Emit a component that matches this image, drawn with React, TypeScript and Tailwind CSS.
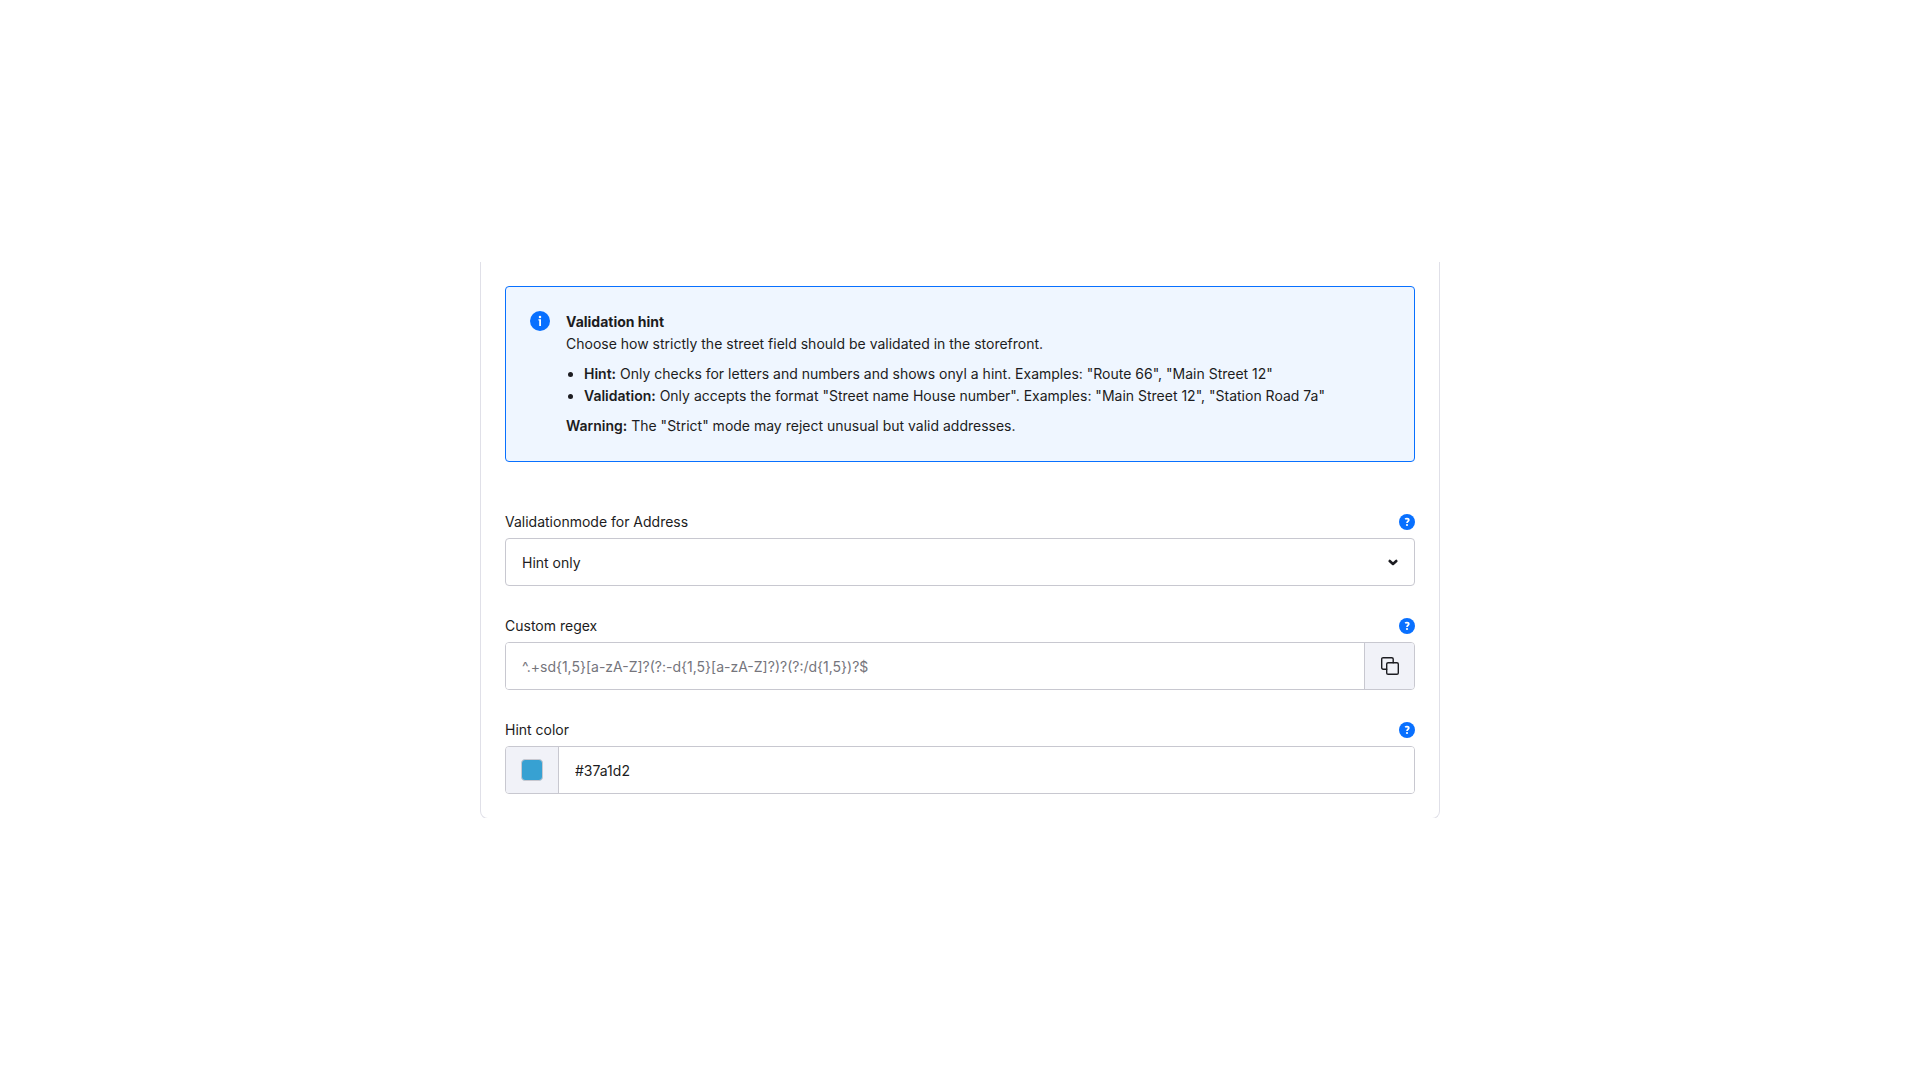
import { useState } from 'react';
import type { ReactNode } from 'react';

function InfoIcon() {
  return (
    <svg className="size-5 shrink-0" viewBox="0 0 20 20" aria-hidden="true">
      <circle cx="10" cy="10" r="10" fill="#0870ff" />
      <circle cx="10" cy="6" r="1.25" fill="#fff" />
      <path d="M8.4 8.2H11V15H9.2V9.5H8.4Z" fill="#fff" />
    </svg>
  );
}

function HelpButton({ topic }: { topic: string }) {
  return (
    <button type="button" aria-label={`Help: ${topic}`} className="size-4 shrink-0">
      <svg className="size-4" viewBox="0 0 16 16" aria-hidden="true">
        <circle cx="8" cy="8" r="8" fill="#0870ff" />
        <path
          d="M6.1 5.2C6.6 4.8 7.2 4.6 8 4.6C9.1 4.6 9.8 5.1 9.8 6C9.8 7.3 8 7.3 8 9"
          fill="none"
          stroke="#fff"
          strokeWidth="1.7"
        />
        <circle cx="8" cy="11" r="1.1" fill="#fff" />
      </svg>
    </button>
  );
}

function Field({ id, label, children }: { id: string; label: string; children: ReactNode }) {
  return (
    <div className="flex flex-col gap-2">
      <div className="flex items-center justify-between">
        <label htmlFor={id} className="leading-4">
          {label}
        </label>
        <HelpButton topic={label} />
      </div>
      {children}
    </div>
  );
}

export default function App() {
  const [mode, setMode] = useState('hint');
  const [regex, setRegex] = useState('');
  const [color, setColor] = useState('#37a1d2');

  return (
    <main className="flex min-h-screen items-center justify-center bg-white font-['Inter',sans-serif] text-sm text-[#1c1c21]">
      <div className="w-full max-w-[960px] overflow-hidden">
        <section className="-mb-px rounded-b-lg border border-t-0 border-[#e0e0e8] p-6">
          <div className="flex gap-4 rounded border border-[#0870ff] bg-[#eff6ff] p-6 leading-[22px]">
            <InfoIcon />
            <div>
              <p className="font-bold">Validation hint</p>
              <p>Choose how strictly the street field should be validated in the storefront.</p>
              <ul className="my-2 list-disc pl-[18px]">
                <li>
                  <strong className="font-semibold">Hint:</strong> Only checks for letters and numbers and shows onyl a
                  hint. Examples: "Route 66", "Main Street 12"
                </li>
                <li>
                  <strong className="font-semibold">Validation:</strong> Only accepts the format "Street name House
                  number". Examples: "Main Street 12", "Station Road 7a"
                </li>
              </ul>
              <p>
                <strong className="font-semibold">Warning:</strong> The "Strict" mode may reject unusual but valid
                addresses.
              </p>
            </div>
          </div>

          <form className="mt-[52px] flex flex-col gap-8">
            <Field id="mode" label="Validationmode for Address">
              <div className="grid items-center">
                <select
                  id="mode"
                  value={mode}
                  onChange={(e) => setMode(e.target.value)}
                  className="col-start-1 row-start-1 h-12 w-full appearance-none rounded border border-[#c8c8d0] bg-white px-4 pt-0.5"
                >
                  <option value="hint">Hint only</option>
                  <option value="strict">Strict</option>
                </select>
                <svg
                  className="pointer-events-none col-start-1 row-start-1 mr-4 size-3 justify-self-end"
                  viewBox="0 0 12 12"
                  aria-hidden="true"
                >
                  <path
                    d="M2.7 5L6 8L9.3 5"
                    fill="none"
                    stroke="#1c1c21"
                    strokeWidth="2.6"
                    strokeLinecap="round"
                    strokeLinejoin="round"
                  />
                </svg>
              </div>
            </Field>

            <Field id="regex" label="Custom regex">
              <div className="flex h-12 overflow-hidden rounded border border-[#c8c8d0]">
                <input
                  id="regex"
                  type="text"
                  value={regex}
                  onChange={(e) => setRegex(e.target.value)}
                  placeholder="^.+sd{1,5}[a-zA-Z]?(?:-d{1,5}[a-zA-Z]?)?(?:/d{1,5})?$"
                  className="min-w-0 flex-1 bg-white px-4 pt-0.5 outline-none placeholder:text-[#75757c]"
                />
                <button
                  type="button"
                  aria-label="Copy"
                  className="flex w-[50px] items-center justify-center border-l border-[#c8c8d0] bg-[#f1f2f8]"
                >
                  <svg
                    className="size-[18px]"
                    viewBox="0 0 18 18"
                    fill="none"
                    stroke="#1c1c21"
                    strokeWidth="1.4"
                    strokeLinejoin="round"
                    strokeLinecap="round"
                    aria-hidden="true"
                  >
                    <rect x="5.7" y="5.7" width="11.6" height="11.6" rx="1.4" />
                    <path d="M5.7 12.2H2.1A1.4 1.4 0 0 1 0.7 10.8V2.1A1.4 1.4 0 0 1 2.1 0.7H10.8A1.4 1.4 0 0 1 12.2 2.1V5.7" />
                  </svg>
                </button>
              </div>
            </Field>

            <Field id="color" label="Hint color">
              <div className="flex h-12 overflow-hidden rounded border border-[#c8c8d0]">
                <div className="flex items-center border-r border-[#c8c8d0] bg-[#f1f2f8] px-[15px]">
                  <button
                    type="button"
                    aria-label="Pick color"
                    className="size-[22px] rounded border border-[#c8c8d0]"
                    style={{ backgroundColor: color }}
                  />
                </div>
                <input
                  id="color"
                  type="text"
                  value={color}
                  onChange={(e) => setColor(e.target.value)}
                  className="min-w-0 flex-1 bg-white px-4 pt-0.5 outline-none"
                />
              </div>
            </Field>
          </form>
        </section>
      </div>
    </main>
  );
}
